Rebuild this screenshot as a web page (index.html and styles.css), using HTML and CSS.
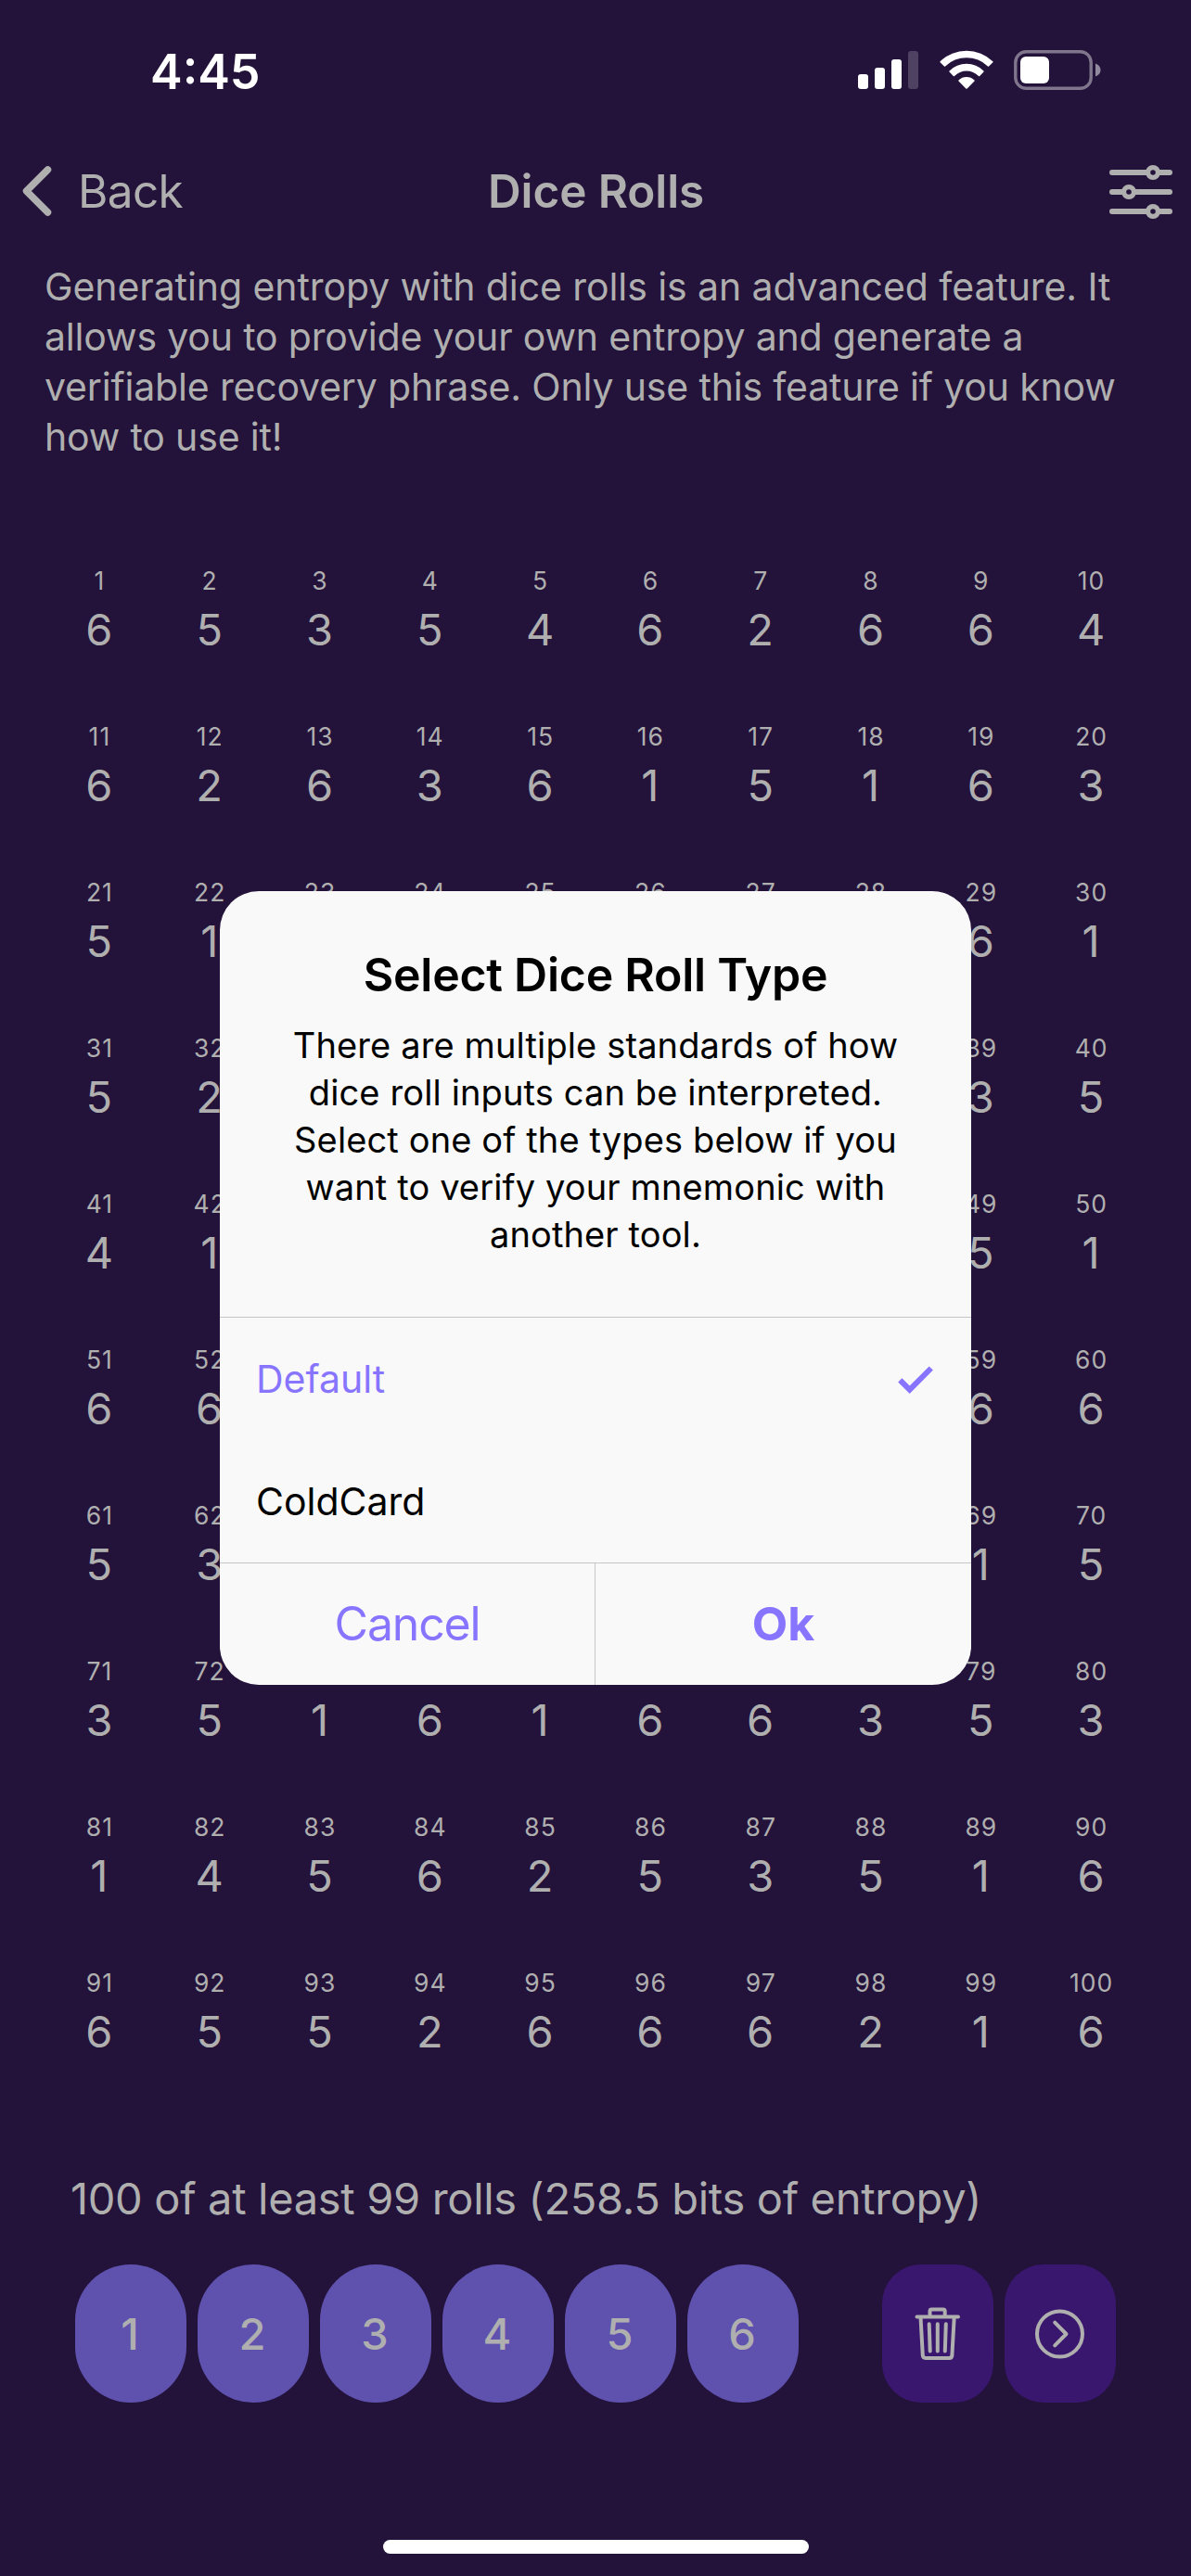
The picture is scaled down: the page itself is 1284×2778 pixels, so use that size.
FILE: index.html
```html
<!DOCTYPE html>
<html lang="en">
<head>
<meta charset="utf-8">
<title>Dice Rolls</title>
<link rel="stylesheet" href="styles.css">
</head>
<body>
<div class="screen">
  <header class="status">
    <span class="time">4:45</span>
    <div class="status-icons">
      <svg class="signal" width="65" height="42" viewBox="0 0 65 42">
        <rect x="0" y="26" width="11" height="16" rx="3"/>
        <rect x="18" y="19" width="11" height="23" rx="3"/>
        <rect x="36" y="10" width="11" height="32" rx="3"/>
        <rect x="54" y="1" width="11" height="41" rx="3" opacity=".2"/>
      </svg>
      <svg class="wifi" width="58" height="42" viewBox="0 0 58 42">
        <path d="M.6 12.2A41 41 0 0 1 57.4 12.2Q57.9 12.8 57.4 13.3L53.1 17.4Q52.5 17.9 51.9 17.4A33 33 0 0 0 6.1 17.4Q5.5 17.9 4.9 17.4L.6 13.3Q.1 12.8 .6 12.2Z"/>
        <path d="M10.5 22.4A26.5 26.5 0 0 1 47.5 22.4Q48 23 47.5 23.6L43.2 27.9Q42.6 28.5 42 27.9A18.5 18.5 0 0 0 16 27.9Q15.4 28.5 14.8 27.9L10.5 23.6Q10 23 10.5 22.4Z"/>
        <path d="M20.5 32.4A12.5 12.5 0 0 1 37.5 32.4Q38.1 33 37.5 33.6L29.7 41.5Q29 42.1 28.3 41.5L20.5 33.6Q19.9 33 20.5 32.4Z"/>
      </svg>
      <svg class="battery" width="94" height="43" viewBox="0 0 94 43">
        <rect x="1.8" y="1.8" width="81.4" height="39.4" rx="11.5" fill="none" stroke="#fff" stroke-width="3.4" opacity=".42"/>
        <rect x="7" y="7" width="31" height="29" rx="6"/>
        <path d="M88 14.5Q93.500 16.5 93.500 21.5T88 28.5Z" opacity=".5"/>
      </svg>
    </div>
  </header>

  <nav class="nav">
    <div class="back">
      <svg width="32" height="54" viewBox="0 0 32 54"><path d="M27.500 4 4.500 27 27.500 50" fill="none" stroke="currentColor" stroke-width="7.500" stroke-linecap="round" stroke-linejoin="round"/></svg>
      <span>Back</span>
    </div>
    <h1 class="nav-title">Dice Rolls</h1>
    <svg class="sliders" width="68" height="60" viewBox="0 0 68 60" fill="none" stroke="currentColor" stroke-width="6" stroke-linecap="round">
      <path d="M3 9H41M53 9H65M3 30H15M27 30H65M3 51H41M53 51H65"/>
      <g stroke-width="5.200"><circle cx="47" cy="9" r="5.400"/><circle cx="21" cy="30" r="5.400"/><circle cx="47" cy="51" r="5.400"/></g>
    </svg>
  </nav>

  <p class="intro"><span class="lead">Generating entropy with dice rolls is an advanced feature. It</span><br>allows you to provide your own entropy and generate a<br>verifiable recovery phrase. Only use this feature if you know<br>how to use it!</p>

  <main class="rolls" id="rolls"></main>

  <p class="summary">100 of at least 99 rolls (258.5 bits of entropy)</p>

  <footer class="controls">
    <div class="group">
      <button class="key">1</button><button class="key">2</button><button class="key">3</button><button class="key">4</button><button class="key">5</button><button class="key">6</button>
    </div>
    <div class="group">
      <button class="key tool">
        <svg width="50" height="58" viewBox="0 0 50 58" fill="none" stroke="currentColor" stroke-width="4" stroke-linecap="round" stroke-linejoin="round">
          <path d="M2.500 10.500H47M16.500 10V4.500Q16.500 2.500 18.500 2.500H30.700Q32.700 2.500 32.700 4.500V10M6.500 11 8.800 52Q9 55 12 55H37.200Q40.200 55 40.400 52L42.700 11M15.700 18.300 16.700 47.500M24.800 18.300V47.500M33.800 18.300 32.800 47.500"/>
        </svg>
      </button>
      <button class="key tool">
        <svg width="54" height="54" viewBox="0 0 54 54" fill="none" stroke="currentColor" stroke-width="4" stroke-linecap="round" stroke-linejoin="round">
          <circle cx="26.500" cy="27" r="24.500"/><path d="M21.200 14.700 33.500 27 21.200 39.300"/>
        </svg>
      </button>
    </div>
  </footer>

  <div class="overlay">
    <section class="dialog">
      <div class="dialog-head">
        <h2>Select Dice Roll Type</h2>
        <p>There are multiple standards of how<br>dice roll inputs can be interpreted.<br>Select one of the types below if you<br>want to verify your mnemonic with<br>another tool.</p>
      </div>
      <ul class="options">
        <li class="selected"><span>Default</span>
          <svg width="40" height="32" viewBox="0 0 40 32"><path d="M2.300 17.300 12.700 27.700 35.800 4.500" fill="none" stroke="currentColor" stroke-width="6"/></svg>
        </li>
        <li><span>ColdCard</span></li>
      </ul>
      <div class="actions">
        <button class="cancel">Cancel</button>
        <button class="ok">Ok</button>
      </div>
    </section>
  </div>
  <div class="home"></div>
</div>
<script src="script.js"></script>
</body>
</html>
```
FILE: styles.css
```css
* { box-sizing: border-box; margin: 0; padding: 0; }

body {
  background: #23123a;
  color: #b0afaf;
  font-family: Inter, "Liberation Sans", sans-serif;
}

button { border: 0; background: none; color: inherit; font: inherit; }
svg { display: block; flex: none; }

.screen {
  position: relative;
  width: 1284px;
  height: 2778px;
  overflow: hidden;
}

.status {
  height: 132px;
  padding: 0 97px 0 162px;
  display: flex;
  justify-content: space-between;
  color: #fff;
}
.time {
  padding-top: 47px;
  font-size: 52px;
  font-weight: 600;
  line-height: 62px;
}
.status-icons {
  display: flex;
  padding-top: 54px;
  fill: #fff;
}
.wifi { margin-left: 23px; }
.battery { margin-left: 22px; }

.nav {
  height: 150px;
  padding: 0 20px 2px 24px;
  display: grid;
  grid-template-columns: 1fr auto 1fr;
  align-items: center;
  font-size: 49.5px;
}
.back {
  display: flex;
  align-items: center;
  gap: 28px;
  letter-spacing: -.65px;
}
.nav-title {
  padding-right: 3px;
  font-size: 49.5px;
  font-weight: 600;
  letter-spacing: -.1px;
}
.sliders { justify-self: end; margin-top: 2px; }

.intro {
  padding-left: 48px;
  font-size: 41px;
  line-height: 54px;
  letter-spacing: -.17px;
  white-space: nowrap;
}
.lead { letter-spacing: -.08px; }

.rolls {
  margin: 110px 48px 0;
  display: grid;
  grid-template-columns: repeat(10, 1fr);
  grid-auto-rows: 168px;
  text-align: center;
}
.index {
  display: block;
  margin-bottom: 5px;
  font-size: 26.5px;
  line-height: 36px;
  letter-spacing: 1px;
}
.value {
  display: block;
  padding-right: 1px;
  font-size: 47px;
  line-height: 60px;
}

.summary {
  margin: 53px 0 41px 76px;
  font-size: 47px;
  line-height: 60px;
  letter-spacing: -.33px;
}

.controls {
  display: flex;
  justify-content: space-between;
  padding: 0 81px;
}
.group { display: flex; gap: 12px; }
.key {
  width: 120px;
  height: 149px;
  padding-right: 2px;
  border-radius: 60px;
  display: flex;
  align-items: center;
  justify-content: center;
  background: #5f52af;
  font-size: 47px;
  font-weight: 500;
}
.tool { padding: 0; background: #3a176e; border-radius: 42px; }

.overlay {
  position: absolute;
  inset: 0;
  display: flex;
  align-items: center;
  justify-content: center;
}
.dialog {
  width: 810px;
  height: 856px;
  border-radius: 42px;
  background: #f9f9f9;
  color: #000;
  overflow: hidden;
}
.dialog-head {
  height: 459px;
  padding-top: 60px;
  text-align: center;
}
.dialog-head h2 {
  font-size: 50px;
  font-weight: 600;
  line-height: 60px;
  letter-spacing: -.26px;
}
.dialog-head p {
  margin-top: 21px;
  font-size: 38px;
  line-height: 51px;
  letter-spacing: .13px;
}
.options {
  height: 265px;
  border-top: 1px solid #c6c6c8;
  list-style: none;
}
.options li {
  height: 132px;
  padding: 0 39px;
  display: flex;
  align-items: center;
  justify-content: space-between;
  font-size: 41px;
}
.options .selected, .actions { color: #8875ff; }
.actions {
  height: 132px;
  border-top: 1px solid #c6c6c8;
  display: grid;
  grid-template-columns: 405px 405px;
  font-size: 50px;
}
.actions button { padding-bottom: 2px; }
.cancel { border-right: 1px solid #c6c6c8; letter-spacing: -1.2px; }
.ok { font-weight: 700; }

.home {
  position: absolute;
  left: 413px;
  bottom: 24px;
  width: 459px;
  height: 15px;
  border-radius: 8px;
  background: #fff;
}
```
FILE: script.js
```js
// One string per row of ten rolls; a space is a roll the dialog covers.
const rows = [
  "6535462664",
  "6263615163",
  "51      61",
  "52      35",
  "41      51",
  "66      66",
  "53      15",
  "3516166353",
  "1456253516",
  "6552666216"
];

const rolls = document.getElementById("rolls");
rows.join("").split("").forEach((value, i) => {
  const cell = document.createElement("div");
  const index = document.createElement("span");
  const digit = document.createElement("span");
  const covered = value === " " && i >= 30;
  index.className = "index";
  index.textContent = covered ? "" : i + 1;
  digit.className = "value";
  digit.textContent = value.trim();
  cell.append(index, digit);
  rolls.append(cell);
});
```
